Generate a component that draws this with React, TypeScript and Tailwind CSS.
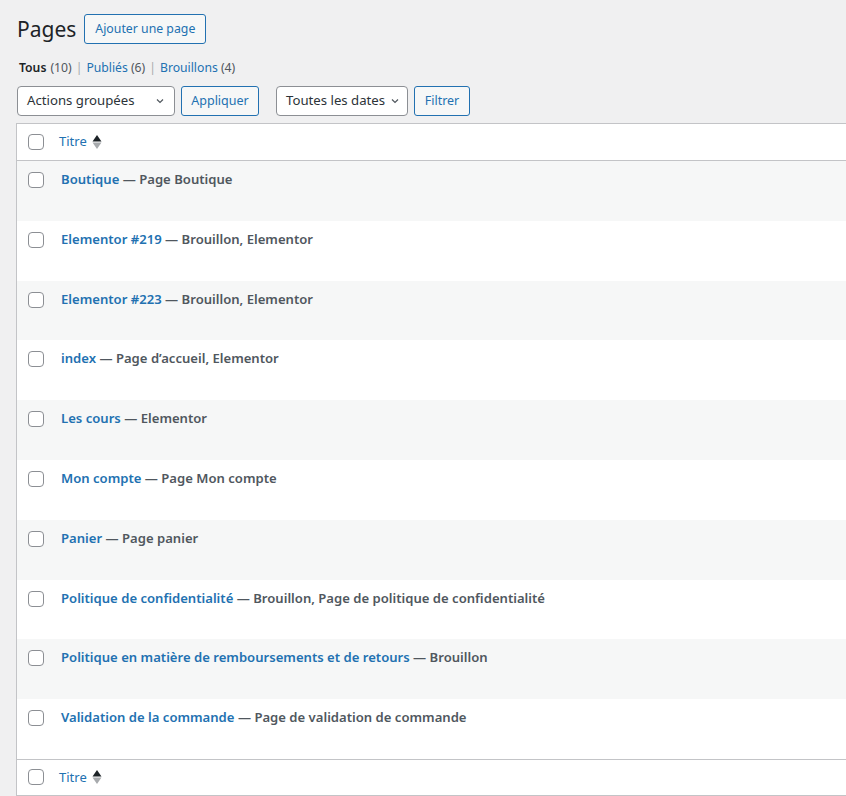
import React from 'react';

type Row = { title: string; state: string };

const rows: Row[] = [
  { title: 'Boutique', state: 'Page Boutique' },
  { title: 'Elementor #219', state: 'Brouillon, Elementor' },
  { title: 'Elementor #223', state: 'Brouillon, Elementor' },
  { title: 'index', state: 'Page d’accueil, Elementor' },
  { title: 'Les cours', state: 'Elementor' },
  { title: 'Mon compte', state: 'Page Mon compte' },
  { title: 'Panier', state: 'Page panier' },
  { title: 'Politique de confidentialité', state: 'Brouillon, Page de politique de confidentialité' },
  { title: 'Politique en matière de remboursements et de retours', state: 'Brouillon' },
  { title: 'Validation de la commande', state: 'Page de validation de commande' },
];

const Checkbox = () => (
  <span className="block w-4 h-4 shrink-0 rounded-[4px] border border-[#8c8f94] bg-white" />
);

const Chevron = () => (
  <svg width="12" height="12" viewBox="0 0 20 20" className="shrink-0">
    <path d="M5 7.5l5 5 5-5" fill="none" stroke="#50575e" strokeWidth="2" />
  </svg>
);

const SortIcon = () => (
  <svg width="10" height="16" viewBox="0 0 10 16" className="ml-[5px]">
    <polygon points="0.5,7.5 5,1 9.5,7.5" fill="#1d2327" />
    <polygon points="0.5,8.5 9.5,8.5 5,15" fill="#a7aaad" />
  </svg>
);

const HeadRow = ({ top }: { top?: boolean }) => (
  <div className={`flex items-center bg-white border-[#c3c4c7] ${top ? 'h-[37px] border-b' : 'h-[36px] border-t'}`}>
    <div className="pl-[11px] w-[42px]">
      <Checkbox />
    </div>
    <a className="flex items-center text-[#2271b1] text-[13px]">
      Titre
      <SortIcon />
    </a>
  </div>
);

export default function App() {
  return (
    <div className="min-h-screen bg-[#f0f0f1] pl-4 font-['Noto_Sans',sans-serif] text-[13px] text-[#3c434a] overflow-hidden">
      {/* Header */}
      <div className="flex items-center gap-[8px] pt-[14px] h-[44px] pl-px">
        <h1 className="text-[21px] font-normal text-[#1d2327] leading-none">Pages</h1>
        <button className="h-[30px] px-[10px] rounded-[3px] border border-[#2271b1] bg-[#f6f7f7] text-[#2271b1] text-[12.3px] whitespace-nowrap">
          Ajouter une page
        </button>
      </div>

      {/* Filters */}
      <div className="flex items-center h-[20px] mt-[14px] pl-[3px] text-[12.2px] whitespace-nowrap">
        <span className="font-semibold text-[#1d2327]">Tous</span>
        <span className="ml-1 text-[#50575e]">(10)</span>
        <span className="mx-[4px] text-[#a7aaad]">|</span>
        <a className="text-[#2271b1]">Publiés <span className="text-[#50575e]">(6)</span></a>
        <span className="mx-[4px] text-[#a7aaad]">|</span>
        <a className="text-[#2271b1]">Brouillons <span className="text-[#50575e]">(4)</span></a>
      </div>

      {/* Tablenav */}
      <div className="flex items-center h-[30px] mt-[8px] pl-px whitespace-nowrap">
        <div className="flex items-center justify-between w-[158px] h-[30px] pl-[9px] pr-[8px] bg-white border border-[#8c8f94] rounded-[4px] text-[13.2px] text-[#2c3338]">
          Actions groupées
          <Chevron />
        </div>
        <button className="ml-[6px] w-[78px] h-[30px] rounded-[3px] border border-[#2271b1] bg-[#f6f7f7] text-[#2271b1] text-[12.5px]">
          Appliquer
        </button>
        <div className="ml-[17px] flex items-center justify-between w-[132px] h-[30px] pl-[9px] pr-[6px] bg-white border border-[#8c8f94] rounded-[4px] text-[13.2px] text-[#2c3338]">
          Toutes les dates
          <Chevron />
        </div>
        <button className="ml-[6px] w-[56px] h-[30px] rounded-[3px] border border-[#2271b1] bg-[#f6f7f7] text-[#2271b1] text-[12.5px]">
          Filtrer
        </button>
      </div>

      {/* Table */}
      <div className="mt-[7px] border-l border-t border-b border-[#c3c4c7] bg-white">
        <HeadRow top />
        {rows.map((r, i) => (
          <div
            key={r.title}
            className={`flex items-start h-[59.8px] ${i % 2 === 0 ? 'bg-[#f6f7f7]' : 'bg-white'}`}
          >
            <div className="pl-[11px] pt-[11px] w-[44px]">
              <Checkbox />
            </div>
            <div className="pt-[8px] text-[13.1px] font-semibold leading-[20px]">
              <a className="text-[#2271b1]">{r.title}</a>
              <span className="text-[#50575e]"> — {r.state}</span>
            </div>
          </div>
        ))}
        <HeadRow />
      </div>
    </div>
  );
}
